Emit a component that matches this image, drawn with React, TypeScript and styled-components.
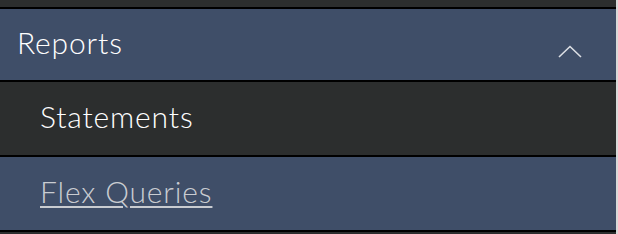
import React from "react";
import styled, { createGlobalStyle } from "styled-components";

const GlobalStyle = createGlobalStyle`
  html, body {
    margin: 0;
    padding: 0;
    background: #d9d9d9;
  }
  body {
    font-family: Lato, "Open Sans", sans-serif;
  }
`;

const Page = styled.div`
  display: flex;
  width: 618px;
  height: 234px;
  overflow: hidden;
`;

const Nav = styled.nav`
  width: 616px;
  background: #2c2e2e;
  display: flex;
  flex-direction: column;
`;

const Edge = styled.div`
  flex: 1;
  background: #d9d9d9;
`;

const Stub = styled.div`
  height: 7px;
  background: #2c2e2e;
  border-bottom: 2px solid #000;
`;

const Header = styled.button`
  all: unset;
  box-sizing: border-box;
  height: 73px;
  display: flex;
  align-items: center;
  justify-content: space-between;
  padding: 0 34px 0 17px;
  background: #3f4e68;
  border-bottom: 2px solid #000;
  color: #fff;
  font-size: 30px;
  font-weight: 300;
  letter-spacing: 0.85px;
  font-family: Lato, "Open Sans", sans-serif;
  cursor: pointer;
`;

const HeaderLabel = styled.span`
  margin-top: -5px;
`;

const ChevronBox = styled.svg`
  margin-top: 14px;
`;

const Item = styled.a<{ $active?: boolean }>`
  box-sizing: border-box;
  height: 75px;
  display: flex;
  align-items: center;
  padding-left: 40px;
  padding-bottom: 5px;
  background: ${(p) => (p.$active ? "#2c2e2e" : "#3f4e68")};
  border-bottom: 2px solid #000;
  color: ${(p) => (p.$active ? "#fff" : "#c9ccd1")};
  text-decoration: ${(p) => (p.$active ? "none" : "underline")};
  text-underline-offset: 3px;
  text-decoration-thickness: 2px;
  font-size: 30px;
  font-weight: 300;
  letter-spacing: 0.85px;
`;

const Chevron = () => (
  <ChevronBox width="24" height="13" viewBox="0 0 24 13" fill="none">
    <path d="M1 12 L12 1.5 L23 12" stroke="#dcdfe4" strokeWidth="1.6" />
  </ChevronBox>
);

export default function App() {
  return (
    <Page>
      <GlobalStyle />
      <Nav>
        <Stub />
        <Header>
          <HeaderLabel>Reports</HeaderLabel>
          <Chevron />
        </Header>
        <Item $active>Statements</Item>
        <Item href="#">Flex Queries</Item>
      </Nav>
      <Edge />
    </Page>
  );
}
